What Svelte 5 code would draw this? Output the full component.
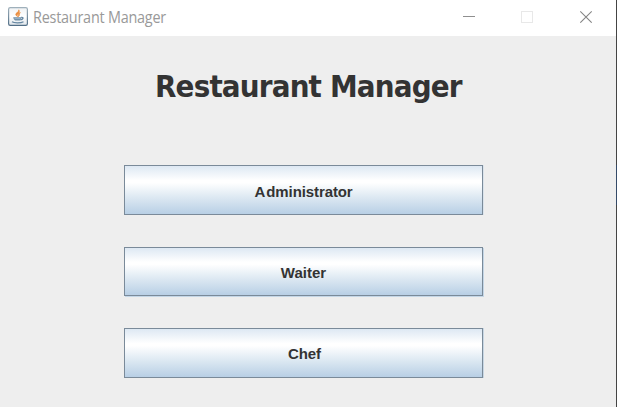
<script>
  const roles = [
    { name: 'Administrator', cls: 'admin' },
    { name: 'Waiter', cls: 'waiter' },
    { name: 'Chef', cls: 'chef' }
  ];
</script>

<div class="window">
  <header>
    <svg class="java" width="20" height="20" viewBox="0 0 20 20">
      <defs>
        <linearGradient id="tile" x1="0" y1="0" x2="0" y2="1">
          <stop offset="0" stop-color="#f0f2f4" />
          <stop offset=".5" stop-color="#ffffff" />
          <stop offset="1" stop-color="#dfe5ea" />
        </linearGradient>
        <linearGradient id="edge" x1="0" y1="0" x2="0" y2="1">
          <stop offset="0" stop-color="#9fb0bb" />
          <stop offset="1" stop-color="#526f87" />
        </linearGradient>
      </defs>
      <rect x=".6" y=".6" width="18.8" height="17.8" rx="1.6" fill="url(#tile)" stroke="url(#edge)" stroke-width="1.2" />
      <path d="M10.8 2.8c.8 2-3.6 3-3 5 .2.8 1.2 1.4 1.7 2-.1-1.2-.7-1.5.2-2.5 1-1.100 2.300-2.400 1.100-4.500zM12.300 5.600c-1.600.5-2.500 1.500-1.800 2.600.3.500.1 1-.3 1.500 2.200-1.300.2-2.200 2.100-4.100z" fill="#ea8c3d" stroke="#ea8c3d" stroke-width=".7" />
      <path d="M5.200 10.200h8.300c-.3 2-.8 3-1.600 3.400H7.200c-1-.6-1.700-1.700-2-3.400z" fill="#6f8fa8" />
      <path d="M13.200 10.500c2.700-.4 2.300 2-.6 2.300M4 14.800c2 1.400 9 1.400 11.500-.1" fill="none" stroke="#6485a0" stroke-width="1.300" />
      <path d="M6.500 11.600h6" stroke="#b9cad6" stroke-width=".6" />
    </svg>
    <span class="caption">Restaurant Manager</span>
    <svg class="controls" width="132" height="14" viewBox="0 0 132 14" fill="none">
      <path d="M0 7.500h12" stroke="#8f8f8f" />
      <rect x="58.500" y="2.500" width="11" height="11" stroke="#e8e8e8" />
      <path d="M117.300 2.300l11.400 11.400M128.700 2.300l-11.400 11.400" stroke="#858585" stroke-width="1.050" />
    </svg>
  </header>
  <main>
    <h1>Restaurant Manager</h1>
    <nav>
      {#each roles as role}
        <button class={role.cls}><span>{role.name}</span></button>
      {/each}
    </nav>
  </main>
</div>

<style>
  .window {
    box-sizing: border-box;
    width: 617px;
    height: 407px;
    overflow: hidden;
    background: #eee;
    border-right: 1px solid;
    border-image: linear-gradient(#444 0 165px, #344a68 165px 205px, #444 205px) 1;
  }
  header {
    display: flex;
    height: 36px;
    background: #fff;
  }
  .java { margin: 7px 0 0 8px; flex: none; }
  .caption {
    width: 140px;
    margin-left: 5px;
    font: 15.5px/35px "Open Sans", sans-serif;
    letter-spacing: -0.25px;
    transform: scaleX(.93);
    transform-origin: left;
    color: #999;
    white-space: nowrap;
  }
  .controls { margin: 9px 0 0 290px; flex: none; }
  main {
    display: flex;
    flex-direction: column;
  }
  h1 {
    margin: 31px 0 0 154.6px;
    height: 40px;
    font: bold 30px/40px "DejaVu Sans", sans-serif;
    letter-spacing: -0.9px;
    transform: scaleX(.928);
    transform-origin: left;
    color: #333;
    white-space: nowrap;
  }
  nav {
    display: flex;
    flex-direction: column;
    width: 359px;
    margin: 58px 0 0 124px;
  }
  button {
    box-sizing: border-box;
    height: 50px;
    padding: 0;
    border: 1px solid #7a8a99;
    border-radius: 0;
    background: linear-gradient(#dde8f3 0, #fff 30%, #fff 35%, #dce8f2 66%, #b8cfe5 100%);
    font: bold 15px/50px "Liberation Sans", Arial, sans-serif;
    letter-spacing: -0.1px;
    color: #333;
  }
  .waiter { height: 49px; margin: 32px 0; line-height: 49px; box-shadow: 1px 1px #c4d6e6; letter-spacing: 0; }
  .chef { box-shadow: 1px 0 #c8d7e4; }
  .chef span { padding-left: 2px; }
  .admin { box-shadow: 1px 0 #dbe4ec; }
  .admin span { padding-top: 1px; }
  .admin span::first-letter { letter-spacing: 1px; }
  span { display: inline-block; }
</style>
